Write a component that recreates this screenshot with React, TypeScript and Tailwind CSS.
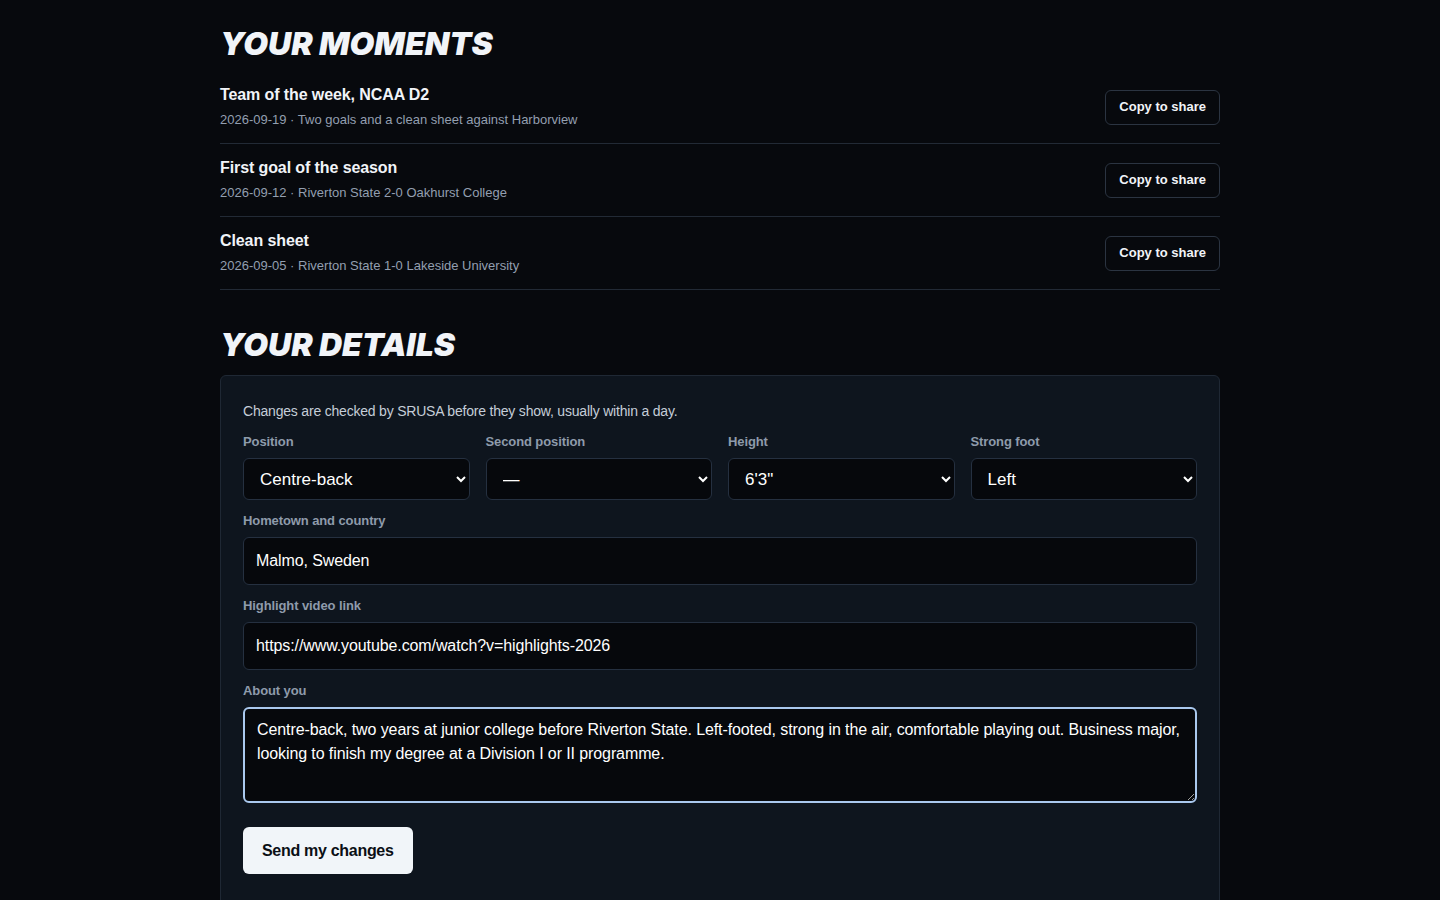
import { useState } from "react";

type Moment = { title: string; date: string; note: string };

const moments: Moment[] = [
  { title: "Team of the week, NCAA D2", date: "2026-09-19", note: "Two goals and a clean sheet against Harborview" },
  { title: "First goal of the season", date: "2026-09-12", note: "Riverton State 2-0 Oakhurst College" },
  { title: "Clean sheet", date: "2026-09-05", note: "Riverton State 1-0 Lakeside University" },
];

const selectCls =
  "h-[42px] w-full rounded-md border border-[#253040] bg-[#06080c] pl-3 pr-2 text-[17px] text-white outline-none";
const inputCls =
  "h-[48px] w-full rounded-md border border-[#253040] bg-[#06080c] px-3 text-[16px] tracking-[-0.1px] text-white outline-none";
const labelCls = "mb-[8px] block text-[13px] font-bold leading-4 tracking-[-0.1px] text-[#8e9bab]";

function Heading({ children }: { children: string }) {
  return (
    <h2 className="font-['Inter',sans-serif] text-[32px] font-black italic uppercase leading-none tracking-normal text-[#f1f4f8]">
      {children}
    </h2>
  );
}

function MomentRow({ m }: { m: Moment }) {
  return (
    <div className="flex items-center justify-between border-b border-[#222a35] pt-[13px] pb-[13px]">
      <div>
        <div className="text-[16px] font-bold leading-[22px] tracking-[-0.1px] text-[#f1f4f8]">{m.title}</div>
        <div className="mt-[4px] text-[13px] leading-5 text-[#939fb0]">
          {m.date} · {m.note}
        </div>
      </div>
      <button className="h-[35px] rounded-md border border-[#2b3441] bg-[#07090d] px-[13px] text-[13px] font-bold text-[#f1f4f8]">
        Copy to share
      </button>
    </div>
  );
}

export default function App() {
  const [about, setAbout] = useState(
    "Centre-back, two years at junior college before Riverton State. Left-footed, strong in the air, comfortable playing out. Business major, looking to finish my degree at a Division I or II programme."
  );

  return (
    <div className="min-h-screen bg-[#07090d] font-['Liberation_Sans',Arial,sans-serif] text-white">
      <div className="mx-auto w-[1000px] pt-[28px]">
        <Heading>Your moments</Heading>
        <div className="mt-[11px]">
          {moments.map((m) => (
            <MomentRow key={m.title} m={m} />
          ))}
        </div>

        <div className="mt-[39px]">
          <Heading>Your details</Heading>
        </div>

        <div className="mt-[14px] rounded-md border border-[#1f2834] bg-[#0e151e] px-[22px] pt-[25px] pb-10">
          <p className="text-[14px] leading-[21px] tracking-[-0.2px] text-[#c5cdd8]">
            Changes are checked by SRUSA before they show, usually within a day.
          </p>

          <div className="mt-[12px] grid grid-cols-4 gap-4">
            <div>
              <label className={labelCls}>Position</label>
              <select className={selectCls} defaultValue="cb">
                <option value="cb">Centre-back</option>
              </select>
            </div>
            <div>
              <label className={labelCls}>Second position</label>
              <select className={selectCls} defaultValue="none">
                <option value="none">—</option>
              </select>
            </div>
            <div>
              <label className={labelCls}>Height</label>
              <select className={selectCls} defaultValue="6-3">
                <option value="6-3">6'3"</option>
              </select>
            </div>
            <div>
              <label className={labelCls}>Strong foot</label>
              <select className={selectCls} defaultValue="left">
                <option value="left">Left</option>
              </select>
            </div>
          </div>

          <div className="mt-[13px]">
            <label className={labelCls}>Hometown and country</label>
            <input className={inputCls} defaultValue="Malmo, Sweden" />
          </div>

          <div className="mt-[13px]">
            <label className={labelCls}>Highlight video link</label>
            <input className={inputCls} defaultValue="https://www.youtube.com/watch?v=highlights-2026" />
          </div>

          <div className="mt-[13px]">
            <label className={labelCls}>About you</label>
            <textarea
              className="block h-[96px] w-full resize-y rounded-md border-2 border-[#a9c8ee] bg-[#06080c] px-3 py-[9px] text-[16px] leading-6 tracking-[-0.1px] text-white outline-none"
              value={about}
              onChange={(e) => setAbout(e.target.value)}
            />
          </div>

          <button className="mt-[24px] h-[47px] rounded-md bg-[#f1f5f9] px-[19px] text-[16px] font-bold tracking-[-0.3px] text-[#0b0f15]">
            Send my changes
          </button>
        </div>
      </div>
    </div>
  );
}
